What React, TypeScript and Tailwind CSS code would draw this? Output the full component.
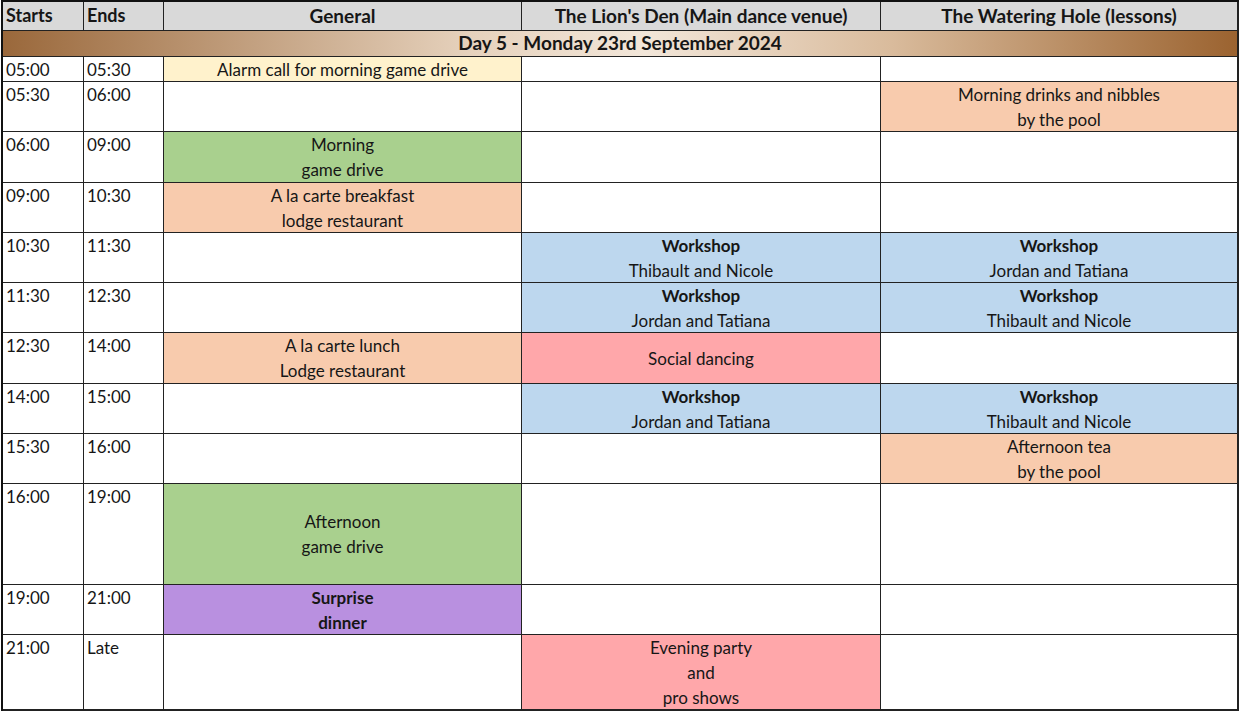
import React from 'react';

type Cell = { lines?: string[]; bold?: boolean; bg?: string };
type Row = { start: string; end: string; h: string; cells: [Cell, Cell, Cell] };

const empty: Cell = {};

const rows: Row[] = [
  { start: '05:00', end: '05:30', h: 'h-[25px]', cells: [{ lines: ['Alarm call for morning game drive'], bg: 'bg-[#fff2cc]' }, empty, empty] },
  { start: '05:30', end: '06:00', h: 'h-[50px]', cells: [empty, empty, { lines: ['Morning drinks and nibbles', 'by the pool'], bg: 'bg-[#f8cbad]' }] },
  { start: '06:00', end: '09:00', h: 'h-[51px]', cells: [{ lines: ['Morning', 'game drive'], bg: 'bg-[#a9d08e]' }, empty, empty] },
  { start: '09:00', end: '10:30', h: 'h-[50px]', cells: [{ lines: ['A la carte breakfast', 'lodge restaurant'], bg: 'bg-[#f8cbad]' }, empty, empty] },
  {
    start: '10:30', end: '11:30', h: 'h-[50px]',
    cells: [
      empty,
      { lines: ['Workshop', 'Thibault and Nicole'], bold: true, bg: 'bg-[#bdd7ee]' },
      { lines: ['Workshop', 'Jordan and Tatiana'], bold: true, bg: 'bg-[#bdd7ee]' },
    ],
  },
  {
    start: '11:30', end: '12:30', h: 'h-[50px]',
    cells: [
      empty,
      { lines: ['Workshop', 'Jordan and Tatiana'], bold: true, bg: 'bg-[#bdd7ee]' },
      { lines: ['Workshop', 'Thibault and Nicole'], bold: true, bg: 'bg-[#bdd7ee]' },
    ],
  },
  {
    start: '12:30', end: '14:00', h: 'h-[51px]',
    cells: [
      { lines: ['A la carte lunch', 'Lodge restaurant'], bg: 'bg-[#f8cbad]' },
      { lines: ['Social dancing'], bg: 'bg-[#ffa7aa]' },
      empty,
    ],
  },
  {
    start: '14:00', end: '15:00', h: 'h-[50px]',
    cells: [
      empty,
      { lines: ['Workshop', 'Jordan and Tatiana'], bold: true, bg: 'bg-[#bdd7ee]' },
      { lines: ['Workshop', 'Thibault and Nicole'], bold: true, bg: 'bg-[#bdd7ee]' },
    ],
  },
  { start: '15:30', end: '16:00', h: 'h-[50px]', cells: [empty, empty, { lines: ['Afternoon tea', 'by the pool'], bg: 'bg-[#f8cbad]' }] },
  { start: '16:00', end: '19:00', h: 'h-[101px]', cells: [{ lines: ['Afternoon', 'game drive'], bg: 'bg-[#a9d08e]' }, empty, empty] },
  { start: '19:00', end: '21:00', h: 'h-[50px]', cells: [{ lines: ['Surprise', 'dinner'], bold: true, bg: 'bg-[#b990e0]' }, empty, empty] },
  { start: '21:00', end: 'Late', h: 'h-[76px]', cells: [empty, { lines: ['Evening party', 'and', 'pro shows'], bg: 'bg-[#ffa7aa]' }, empty] },
];

// workshops only have the title in bold, surprise dinner is bold throughout
function lineWeight(cell: Cell, i: number) {
  if (!cell.bold) return '';
  if (cell.lines![0] === 'Workshop') return i === 0 ? 'font-bold' : '';
  return 'font-bold';
}

function EventCell({ cell, h, last, bottom }: { cell: Cell; h: string; last: boolean; bottom: boolean }) {
  return (
    <div
      className={`${h} ${cell.bg ?? 'bg-white'} ${last ? 'border-r-2' : 'border-r'} ${bottom ? 'border-b-2' : 'border-b'} border-[#222] flex flex-col justify-center items-center text-center`}
    >
      {cell.lines?.map((l, i) => (
        <div key={i} className={lineWeight(cell, i)}>
          {l}
        </div>
      ))}
    </div>
  );
}

export default function App() {
  return (
    <div
      className="w-[1240px] h-[712px] overflow-hidden bg-white text-[17px] leading-[25px] text-[#161616]"
      style={{ fontFamily: 'Lato, "Open Sans", sans-serif' }}
    >
      <div className="ml-[1px] w-[1238px] border-l-2 border-t-2 border-[#111] grid grid-cols-[81px_80px_358px_359px_358px]">
        {/* header */}
        <div className="h-[29px] bg-[#d9d9d9] border-r border-b border-[#222] pl-[3px] font-bold text-[18px] leading-[27px]">Starts</div>
        <div className="h-[29px] bg-[#d9d9d9] border-r border-b border-[#222] pl-[3px] font-bold text-[18px] leading-[27px]">Ends</div>
        <div className="h-[29px] bg-[#d9d9d9] border-r border-b border-[#222] text-center font-bold text-[19px] leading-[27px]">General</div>
        <div className="h-[29px] bg-[#d9d9d9] border-r border-b border-[#222] text-center font-bold text-[19px] leading-[27px]">The Lion's Den (Main dance venue)</div>
        <div className="h-[29px] bg-[#d9d9d9] border-r-2 border-b border-[#222] text-center font-bold text-[19px] leading-[27px]">The Watering Hole (lessons)</div>

        {/* day banner */}
        <div className="col-span-5 h-[26px] border-r-2 border-b border-[#222] text-center font-bold text-[19px] leading-[24px] bg-[linear-gradient(to_right,#9a683b,#e6d2bd_38%,#f2e6d9_52%,#d9bb9c_72%,#9b6330)]">
          Day 5 - Monday 23rd September 2024
        </div>

        {rows.map((r, ri) => {
          const bottom = ri === rows.length - 1;
          const bb = bottom ? 'border-b-2' : 'border-b';
          return (
            <React.Fragment key={r.start}>
              <div className={`${r.h} border-r ${bb} border-[#222] pl-[3px] pt-[0px]`}>{r.start}</div>
              <div className={`${r.h} border-r ${bb} border-[#222] pl-[3px] pt-[0px]`}>{r.end}</div>
              {r.cells.map((c, i) => (
                <EventCell key={i} cell={c} h={r.h} last={i === 2} bottom={bottom} />
              ))}
            </React.Fragment>
          );
        })}
      </div>
    </div>
  );
}
